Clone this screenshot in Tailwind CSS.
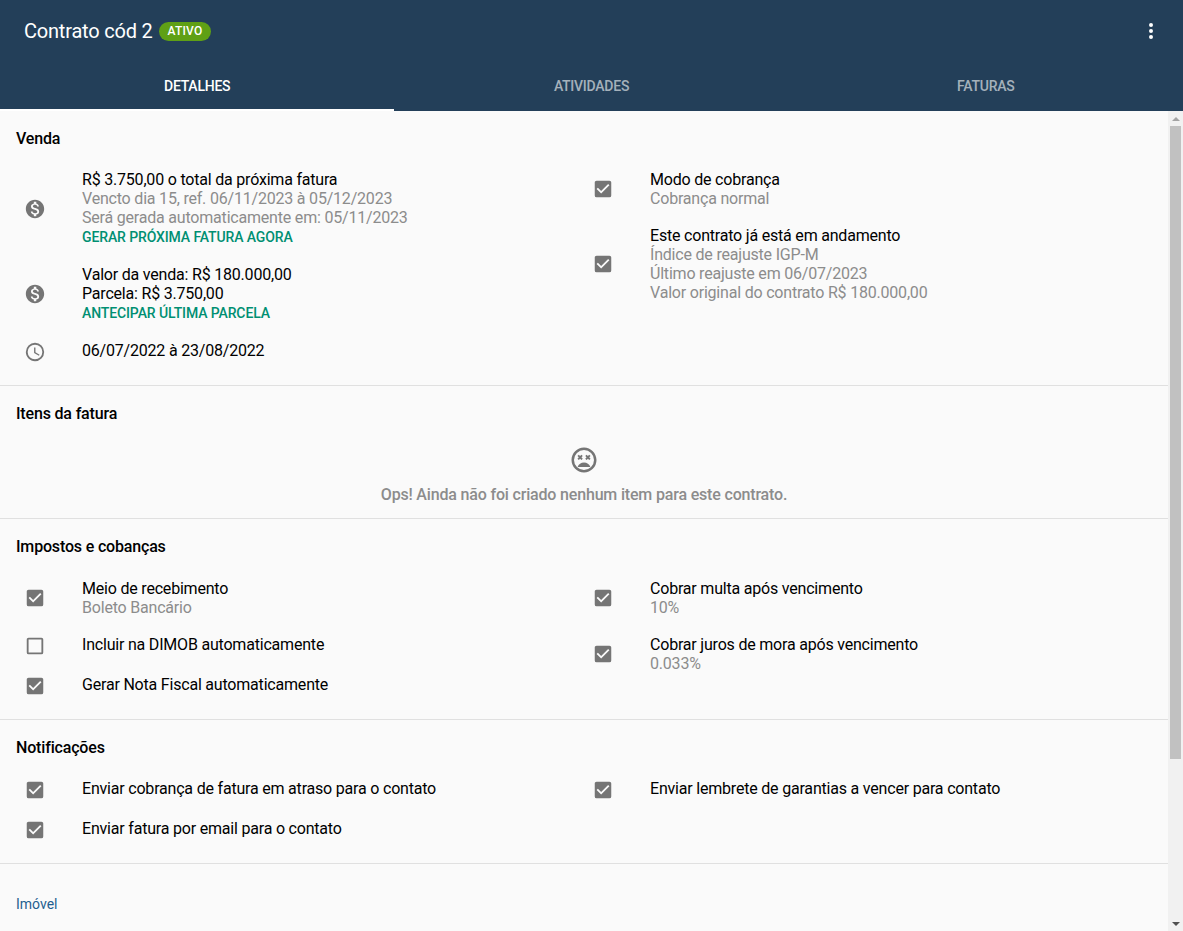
<!DOCTYPE html>
<html lang="pt-BR">
<head>
  <meta charset="UTF-8" />
  <meta name="viewport" content="width=device-width, initial-scale=1.0" />
  <title>Contrato cód 2</title>
  <script src="https://cdn.jsdelivr.net/npm/@tailwindcss/browser@4"></script>
</head>
<body class="h-screen overflow-hidden bg-[#fafafa] font-['Roboto',sans-serif] text-base leading-[19px] tracking-[-0.2px] text-black antialiased">
  <div class="flex h-full flex-col">
    <!-- Header -->
    <header class="h-[111px] shrink-0 bg-[#233f59] text-white">
      <div class="flex h-[62px] items-center pl-6 pr-5">
        <h1 class="text-xl leading-6 tracking-[-0.2px]">Contrato cód 2</h1>
        <span class="ml-[6px] flex h-[19px] items-center rounded-full bg-[#5fa015] px-[9px] text-xs font-medium tracking-[0.2px]">ATIVO</span>
        <svg class="ml-auto size-6 fill-white" viewBox="0 0 24 24"><path d="M12,16A2,2 0 0,1 14,18A2,2 0 0,1 12,20A2,2 0 0,1 10,18A2,2 0 0,1 12,16M12,10A2,2 0 0,1 14,12A2,2 0 0,1 12,14A2,2 0 0,1 10,12A2,2 0 0,1 12,10M12,4A2,2 0 0,1 14,6A2,2 0 0,1 12,8A2,2 0 0,1 10,6A2,2 0 0,1 12,4Z"/></svg>
      </div>
      <nav class="grid h-[49px] grid-cols-3 text-center text-sm font-medium tracking-[-0.25px]">
        <a class="flex items-center justify-center border-b-2 border-white">DETALHES</a>
        <a class="flex items-center justify-center border-b-2 border-transparent text-white/60">ATIVIDADES</a>
        <a class="flex items-center justify-center border-b-2 border-transparent text-white/60">FATURAS</a>
      </nav>
    </header>

    <div class="flex min-h-0 flex-1">
      <main class="min-w-0 flex-1 overflow-hidden">
        <!-- Venda -->
        <section class="border-b border-[#e0e0e0] px-4 pt-4 pb-[13px]">
          <h2 class="h-[23px] font-medium leading-[23px] tracking-[-0.17px]">Venda</h2>
          <div class="mt-[11px] grid grid-cols-2">
            <div>
              <div class="flex min-h-10 items-center py-[9px]">
                <svg class="ml-2 mr-[36px] size-[22px] shrink-0 fill-[#757575]" viewBox="0 0 24 24"><path d="M12 2C6.48 2 2 6.48 2 12s4.48 10 10 10 10-4.48 10-10S17.52 2 12 2zm1.41 16.09V20h-2.67v-1.93c-1.71-.36-3.16-1.46-3.27-3.4h1.96c.1 1.05.82 1.87 2.65 1.87 1.96 0 2.4-.98 2.4-1.59 0-.83-.44-1.61-2.67-2.14-2.48-.6-4.18-1.62-4.18-3.67 0-1.72 1.39-2.84 3.11-3.21V4h2.67v1.95c1.86.45 2.79 1.86 2.85 3.39H14.3c-.05-1.11-.64-1.87-2.22-1.87-1.5 0-2.4.68-2.4 1.64 0 .84.65 1.39 2.67 1.91s4.18 1.39 4.18 3.91c-.01 1.83-1.38 2.83-3.12 3.16z"/></svg>
                <div>
                  <p>R$ 3.750,00 o total da próxima fatura</p>
                  <p class="text-[#8c8c8c]">Vencto dia 15, ref. 06/11/2023 à 05/12/2023</p>
                  <p class="text-[#8c8c8c]">Será gerada automaticamente em: 05/11/2023</p>
                  <a class="block text-sm font-medium tracking-[-0.115px] text-[#008f72]">GERAR PRÓXIMA FATURA AGORA</a>
                </div>
              </div>
              <div class="flex min-h-10 items-center py-[9px]">
                <svg class="ml-2 mr-[36px] size-[22px] shrink-0 fill-[#757575]" viewBox="0 0 24 24"><path d="M12 2C6.48 2 2 6.48 2 12s4.48 10 10 10 10-4.48 10-10S17.52 2 12 2zm1.41 16.09V20h-2.67v-1.93c-1.71-.36-3.16-1.46-3.27-3.4h1.96c.1 1.05.82 1.87 2.65 1.87 1.96 0 2.4-.98 2.4-1.59 0-.83-.44-1.61-2.67-2.14-2.48-.6-4.18-1.62-4.18-3.67 0-1.72 1.39-2.84 3.11-3.21V4h2.67v1.95c1.86.45 2.79 1.86 2.85 3.39H14.3c-.05-1.11-.64-1.87-2.22-1.87-1.5 0-2.4.68-2.4 1.64 0 .84.65 1.39 2.67 1.91s4.18 1.39 4.18 3.91c-.01 1.83-1.38 2.83-3.12 3.16z"/></svg>
                <div>
                  <p>Valor da venda: R$ 180.000,00</p>
                  <p>Parcela: R$ 3.750,00</p>
                  <a class="block text-sm font-medium tracking-[-0.115px] text-[#008f72]">ANTECIPAR ÚLTIMA PARCELA</a>
                </div>
              </div>
              <div class="flex min-h-10 py-[9px]">
                <svg class="ml-2 mr-[36px] size-[22px] shrink-0 fill-[#757575]" viewBox="0 0 24 24"><path d="M12,20A8,8 0 0,0 20,12A8,8 0 0,0 12,4A8,8 0 0,0 4,12A8,8 0 0,0 12,20M12,2A10,10 0 0,1 22,12A10,10 0 0,1 12,22C6.47,22 2,17.5 2,12A10,10 0 0,1 12,2M12.5,7V12.25L17,14.92L16.25,16.15L11,13V7H12.5Z"/></svg>
                <p>06/07/2022 à 23/08/2022</p>
              </div>
            </div>
            <div>
              <div class="flex min-h-10 items-center py-[9px]">
                <svg class="ml-2 mr-[36px] size-[22px] shrink-0 fill-[#757575]" viewBox="0 0 24 24"><path d="M10,17L5,12L6.41,10.58L10,14.17L17.59,6.58L19,8M19,3H5C3.89,3 3,3.89 3,5V19A2,2 0 0,0 5,21H19A2,2 0 0,0 21,19V5C21,3.89 20.1,3 19,3Z"/></svg>
                <div>
                  <p>Modo de cobrança</p>
                  <p class="text-[#8c8c8c]">Cobrança normal</p>
                </div>
              </div>
              <div class="flex min-h-10 items-center py-[9px]">
                <svg class="ml-2 mr-[36px] size-[22px] shrink-0 fill-[#757575]" viewBox="0 0 24 24"><path d="M10,17L5,12L6.41,10.58L10,14.17L17.59,6.58L19,8M19,3H5C3.89,3 3,3.89 3,5V19A2,2 0 0,0 5,21H19A2,2 0 0,0 21,19V5C21,3.89 20.1,3 19,3Z"/></svg>
                <div>
                  <p>Este contrato já está em andamento</p>
                  <p class="text-[#8c8c8c]">Índice de reajuste IGP-M</p>
                  <p class="text-[#8c8c8c]">Último reajuste em 06/07/2023</p>
                  <p class="text-[#8c8c8c]">Valor original do contrato R$ 180.000,00</p>
                </div>
              </div>
            </div>
          </div>
        </section>

        <!-- Itens da fatura -->
        <section class="h-[133px] border-b border-[#e0e0e0] px-4 pt-4">
          <h2 class="h-[23px] font-medium leading-[23px] tracking-[-0.17px]">Itens da fatura</h2>
          <div class="flex flex-col items-center">
            <svg class="mt-[20px] size-[30px] fill-[#757575]" viewBox="0 0 24 24"><path d="M12,2C6.47,2 2,6.47 2,12C2,17.53 6.47,22 12,22A10,10 0 0,0 22,12C22,6.47 17.5,2 12,2M12,20A8,8 0 0,1 4,12A8,8 0 0,1 12,4A8,8 0 0,1 20,12A8,8 0 0,1 12,20M16.18,7.76L15.12,8.82L14.06,7.76L13,8.82L14.06,9.88L13,10.94L14.06,12L15.12,10.94L16.18,12L17.24,10.94L16.18,9.88L17.24,8.82L16.18,7.76M7.82,12L8.88,10.94L9.94,12L11,10.94L9.94,9.88L11,8.82L9.94,7.76L8.88,8.82L7.82,7.76L6.76,8.82L7.82,9.88L6.76,10.94L7.82,12M12,14C9.67,14 7.69,15.46 6.89,17.5H17.11C16.31,15.46 14.33,14 12,14Z"/></svg>
            <p class="mt-[10px] font-medium tracking-[-0.175px] text-[#8c8c8c]">Ops! Ainda não foi criado nenhum item para este contrato.</p>
          </div>
        </section>

        <!-- Impostos e cobanças -->
        <section class="border-b border-[#e0e0e0] px-4 pt-4 pb-[13px]">
          <h2 class="h-[23px] font-medium leading-[23px] tracking-[-0.17px]">Impostos e cobanças</h2>
          <div class="mt-[12px] grid grid-cols-2">
            <div>
              <div class="flex min-h-10 items-center py-[9px]">
                <svg class="ml-2 mr-[36px] size-[22px] shrink-0 fill-[#757575]" viewBox="0 0 24 24"><path d="M10,17L5,12L6.41,10.58L10,14.17L17.59,6.58L19,8M19,3H5C3.89,3 3,3.89 3,5V19A2,2 0 0,0 5,21H19A2,2 0 0,0 21,19V5C21,3.89 20.1,3 19,3Z"/></svg>
                <div>
                  <p>Meio de recebimento</p>
                  <p class="text-[#8c8c8c]">Boleto Bancário</p>
                </div>
              </div>
              <div class="flex min-h-10 py-[9px]">
                <svg class="ml-2 mr-[36px] size-[22px] shrink-0 fill-[#757575]" viewBox="0 0 24 24"><path d="M19,3H5C3.89,3 3,3.89 3,5V19A2,2 0 0,0 5,21H19A2,2 0 0,0 21,19V5C21,3.89 20.1,3 19,3M19,5V19H5V5H19Z"/></svg>
                <p>Incluir na DIMOB automaticamente</p>
              </div>
              <div class="flex min-h-10 py-[9px]">
                <svg class="ml-2 mr-[36px] size-[22px] shrink-0 fill-[#757575]" viewBox="0 0 24 24"><path d="M10,17L5,12L6.41,10.58L10,14.17L17.59,6.58L19,8M19,3H5C3.89,3 3,3.89 3,5V19A2,2 0 0,0 5,21H19A2,2 0 0,0 21,19V5C21,3.89 20.1,3 19,3Z"/></svg>
                <p>Gerar Nota Fiscal automaticamente</p>
              </div>
            </div>
            <div>
              <div class="flex min-h-10 items-center py-[9px]">
                <svg class="ml-2 mr-[36px] size-[22px] shrink-0 fill-[#757575]" viewBox="0 0 24 24"><path d="M10,17L5,12L6.41,10.58L10,14.17L17.59,6.58L19,8M19,3H5C3.89,3 3,3.89 3,5V19A2,2 0 0,0 5,21H19A2,2 0 0,0 21,19V5C21,3.89 20.1,3 19,3Z"/></svg>
                <div>
                  <p>Cobrar multa após vencimento</p>
                  <p class="text-[#8c8c8c]">10%</p>
                </div>
              </div>
              <div class="flex min-h-10 items-center py-[9px]">
                <svg class="ml-2 mr-[36px] size-[22px] shrink-0 fill-[#757575]" viewBox="0 0 24 24"><path d="M10,17L5,12L6.41,10.58L10,14.17L17.59,6.58L19,8M19,3H5C3.89,3 3,3.89 3,5V19A2,2 0 0,0 5,21H19A2,2 0 0,0 21,19V5C21,3.89 20.1,3 19,3Z"/></svg>
                <div>
                  <p>Cobrar juros de mora após vencimento</p>
                  <p class="text-[#8c8c8c]">0.033%</p>
                </div>
              </div>
            </div>
          </div>
        </section>

        <!-- Notificações -->
        <section class="border-b border-[#e0e0e0] px-4 pt-4 pb-[13px]">
          <h2 class="h-[23px] font-medium leading-[23px] tracking-[-0.17px]">Notificações</h2>
          <div class="mt-[11px] grid grid-cols-2">
            <div>
              <div class="flex min-h-10 py-[9px]">
                <svg class="ml-2 mr-[36px] size-[22px] shrink-0 fill-[#757575]" viewBox="0 0 24 24"><path d="M10,17L5,12L6.41,10.58L10,14.17L17.59,6.58L19,8M19,3H5C3.89,3 3,3.89 3,5V19A2,2 0 0,0 5,21H19A2,2 0 0,0 21,19V5C21,3.89 20.1,3 19,3Z"/></svg>
                <p>Enviar cobrança de fatura em atraso para o contato</p>
              </div>
              <div class="flex min-h-10 py-[9px]">
                <svg class="ml-2 mr-[36px] size-[22px] shrink-0 fill-[#757575]" viewBox="0 0 24 24"><path d="M10,17L5,12L6.41,10.58L10,14.17L17.59,6.58L19,8M19,3H5C3.89,3 3,3.89 3,5V19A2,2 0 0,0 5,21H19A2,2 0 0,0 21,19V5C21,3.89 20.1,3 19,3Z"/></svg>
                <p>Enviar fatura por email para o contato</p>
              </div>
            </div>
            <div>
              <div class="flex min-h-10 py-[9px]">
                <svg class="ml-2 mr-[36px] size-[22px] shrink-0 fill-[#757575]" viewBox="0 0 24 24"><path d="M10,17L5,12L6.41,10.58L10,14.17L17.59,6.58L19,8M19,3H5C3.89,3 3,3.89 3,5V19A2,2 0 0,0 5,21H19A2,2 0 0,0 21,19V5C21,3.89 20.1,3 19,3Z"/></svg>
                <p>Enviar lembrete de garantias a vencer para contato</p>
              </div>
            </div>
          </div>
        </section>

        <!-- Imóvel -->
        <section class="px-4 pt-[30px]">
          <a class="text-sm tracking-normal text-[#1f6090]">Imóvel</a>
        </section>
      </main>

      <!-- Scrollbar -->
      <div class="flex w-[15px] shrink-0 flex-col items-center bg-[#f1f1f1]">
        <div class="flex h-[15px] w-full shrink-0 items-center justify-center">
          <div class="size-0 border-x-4 border-b-4 border-x-transparent border-b-[#a3a3a3]"></div>
        </div>
        <div class="h-[633px] w-[11px] shrink-0 bg-[#c1c1c1]"></div>
        <div class="mt-auto flex h-[15px] w-full shrink-0 items-center justify-center">
          <div class="size-0 border-x-4 border-t-4 border-x-transparent border-t-[#505050]"></div>
        </div>
      </div>
    </div>
  </div>
</body>
</html>
